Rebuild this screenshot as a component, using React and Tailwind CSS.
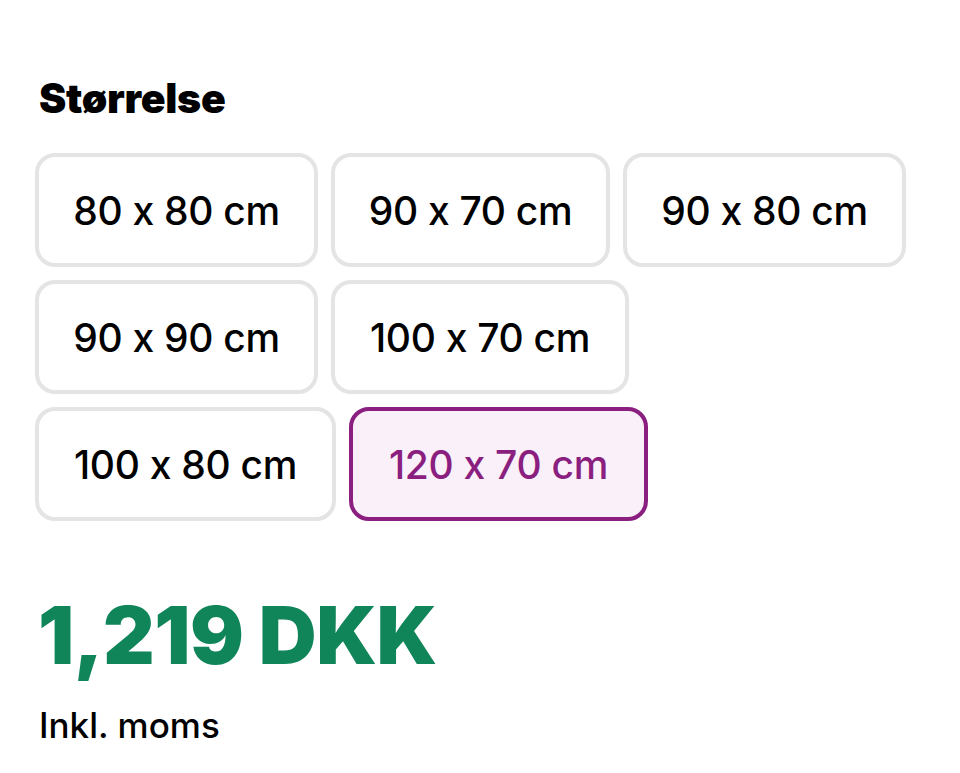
import React from 'react';

// Size options, widths taken from the design so rows wrap the same way
const sizes = [
  { label: '80 x 80 cm', w: 'w-[283px]' },
  { label: '90 x 70 cm', w: 'w-[279px]' },
  { label: '90 x 80 cm', w: 'w-[283px]' },
  { label: '90 x 90 cm', w: 'w-[283px]' },
  { label: '100 x 70 cm', w: 'w-[298px]' },
  { label: '100 x 80 cm', w: 'w-[301px]' },
  { label: '120 x 70 cm', w: 'w-[299px]', selected: true },
];

const SizeButton = ({ label, w, selected }) => (
  <button
    className={
      selected
        ? `${w} h-[114px] rounded-[20px] border-4 border-[#8a1f80] bg-[#faf0f9] text-[#8a1f80] text-[39px] tracking-[-0.3px] font-medium leading-none`
        : `${w} h-[114px] rounded-[20px] border-4 border-[#e4e4e4] bg-white text-black text-[39px] tracking-[-0.3px] font-medium leading-none`
    }
  >
    {label}
  </button>
);

const App = () => {
  return (
    <div className="min-h-screen bg-white px-[35px] font-['Inter','Liberation_Sans',sans-serif] [font-feature-settings:'calt'_0]">
      {/* Heading */}
      <h2 className="pt-[78px] ml-[4px] text-[41px] font-black leading-none tracking-[-0.3px] text-black">Størrelse</h2>

      {/* Size options */}
      <div className="mt-[34px] flex flex-wrap gap-[13px]">
        {sizes.map((s) => (
          <SizeButton key={s.label} {...s} />
        ))}
      </div>

      {/* Price */}
      <div className="mt-[74px] ml-[3px] text-[80px] font-black leading-none tracking-[-0.5px] text-[#11855a]">1,219 DKK</div>
      <div className="mt-[33px] ml-[4px] text-[35px] font-medium leading-none text-black">Inkl. moms</div>
    </div>
  );
};

export default App;
